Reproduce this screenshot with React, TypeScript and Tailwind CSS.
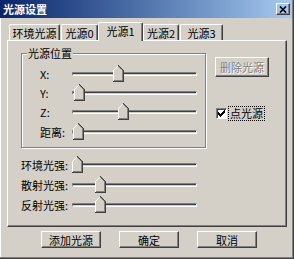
import React from "react";

const raised =
  "border border-t-white border-l-white border-r-[#404040] border-b-[#404040] shadow-[inset_-1px_-1px_#808080]";

function Thumb({ pos }: { pos: number }) {
  return (
    <svg
      width="11"
      height="17"
      viewBox="0 0 11 17"
      className="absolute top-[1px]"
      style={{ left: pos - 5 }}
      shapeRendering="crispEdges"
    >
      <polygon points="0.5,16.5 0.5,5.5 5.5,0.5 10.5,5.5 10.5,16.5" fill="#d4d0c8" />
      <polyline points="0.5,16 0.5,5.5 5.5,0.5" fill="none" stroke="#fff" />
      <polyline points="5.5,0.5 10.5,5.5 10.5,16.5 0,16.5" fill="none" stroke="#404040" />
      <polyline points="5.5,1.5 9.5,5.5 9.5,15.5 1,15.5" fill="none" stroke="#808080" />
    </svg>
  );
}

function Slider({ pos }: { pos: number }) {
  return (
    <div className="relative flex h-full w-[125px] items-center">
      <div className="h-[4px] w-full border border-t-[#808080] border-l-[#808080] border-b-white border-r-white bg-[#d4d0c8] shadow-[inset_0_1px_#404040]" />
      <Thumb pos={pos} />
    </div>
  );
}

function Row({ label, pos, h, labelW }: { label: string; pos: number; h: string; labelW: string }) {
  return (
    <div className={`flex items-center ${h}`}>
      <span className={`${labelW} leading-[14px]`}>{label}</span>
      <Slider pos={pos} />
    </div>
  );
}

const tabs = [
  { name: "环境光源", w: "w-[51px]", ml: "ml-[2px]" },
  { name: "光源0", w: "w-[37px]", ml: "ml-[1px]" },
  { name: "光源1", w: "w-[45px]", ml: "ml-[0px]", active: true },
  { name: "光源2", w: "w-[36px]", ml: "ml-[0px]" },
  { name: "光源3", w: "w-[43px]", ml: "ml-[1px]" },
];

export default function App() {
  return (
    <div className="flex h-[259px] w-[294px] flex-col overflow-hidden border-r border-b border-[#404040] bg-[#d4d0c8] font-['Noto_Sans_CJK_SC','Noto_Sans',sans-serif] text-[11px] text-black shadow-[inset_-1px_-1px_#808080,inset_1px_0_#fff]">
      {/* title bar */}
      <div className="mr-[1px] flex h-[18px] shrink-0 items-center justify-between bg-gradient-to-r from-[#0a246a] to-[#a6caf0] pl-[3px] pr-[2px]">
        <span className="font-bold leading-[14px] text-white">光源设置</span>
        <div className={`flex h-[12px] w-[14px] items-center justify-center ${raised}`}>
          <svg width="8" height="7" viewBox="0 0 8 7">
            <path d="M1 0.5 L7 6.5 M7 0.5 L1 6.5" stroke="#000" strokeWidth="1.6" />
          </svg>
        </div>
      </div>

      <div className="flex flex-col pl-[7px]">
        {/* tabs */}
        <div className="mt-[4px] flex h-[18px] items-end">
          {tabs.map((t) => (
            <div
              key={t.name}
              className={`flex items-center justify-center rounded-t-[2px] border-t border-l border-r border-t-white border-l-white border-r-[#404040] bg-[#d4d0c8] leading-[14px] shadow-[inset_-1px_0_#808080] ${t.w} ${t.ml} ${
                t.active ? "relative z-10 mb-[-1px] h-[19px] pb-[2px]" : "h-[16px]"
              }`}
            >
              {t.name}
            </div>
          ))}
        </div>

        {/* tab panel */}
        <div className="flex h-[187px] w-[280px] border border-t-white border-l-white border-r-[#404040] border-b-[#404040] pl-[13px] pt-[12px] shadow-[inset_-1px_-1px_#808080]">
          <div className="flex w-[186px] flex-col">
            <div className="relative h-[95px] w-[185px] border border-[#808080] pl-[18px] pt-[10px] shadow-[1px_1px_#fff,inset_1px_1px_#fff]">
              <span className="absolute left-[5px] top-[-8px] bg-[#d4d0c8] px-[1px] leading-[14px]">光源位置</span>
              <Row label="X:" pos={46} h="h-[19px]" labelW="w-[32px]" />
              <Row label="Y:" pos={7} h="h-[19px]" labelW="w-[32px]" />
              <Row label="Z:" pos={51} h="h-[20px]" labelW="w-[32px]" />
              <Row label="距离:" pos={6} h="h-[19px]" labelW="w-[32px]" />
            </div>
            <div className="mt-[7px] flex flex-col">
              <Row label="环境光强:" pos={5} h="h-[20px]" labelW="w-[51px]" />
              <Row label="散射光强:" pos={28} h="h-[20px]" labelW="w-[51px]" />
              <Row label="反射光强:" pos={28} h="h-[20px]" labelW="w-[51px]" />
            </div>
          </div>

          <div className="ml-[8px] flex flex-col pt-[4px]">
            <div className={`flex h-[20px] w-[54px] items-center justify-center leading-[14px] text-[#808080] [text-shadow:1px_1px_#fff] ${raised}`}>
              删除光源
            </div>
            <div className="ml-[1px] mt-[29px] flex h-[14px] items-center">
              <div className="flex h-[11px] w-[11px] items-center justify-center border border-t-[#808080] border-l-[#808080] border-b-white border-r-white bg-white shadow-[inset_1px_1px_#404040]">
                <svg width="7" height="7" viewBox="0 0 7 7" shapeRendering="crispEdges">
                  <path d="M0 2h1v1h1v1h1v-1h1v-1h1v-1h1v-1h1v3h-1v1h-1v1h-1v1h-1v1h-1v-1h-1v-1h-1z" fill="#000" />
                </svg>
              </div>
              <span className="ml-[2px] px-[1px] leading-[13px] outline outline-1 outline-dotted outline-black">点光源</span>
            </div>
          </div>
        </div>

        {/* bottom buttons */}
        <div className="ml-[34px] mt-[4px] flex gap-[18px]">
          {["添加光源", "确定", "取消"].map((b) => (
            <div key={b} className={`flex h-[17px] w-[60px] items-center justify-center leading-[14px] ${raised}`}>
              {b}
            </div>
          ))}
        </div>
      </div>
    </div>
  );
}
